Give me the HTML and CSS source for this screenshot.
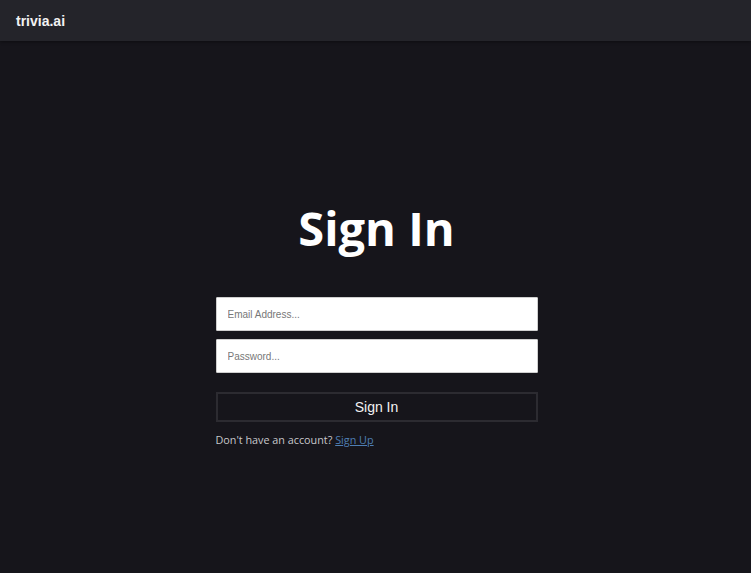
FILE: index.html
```html
<!DOCTYPE html>
<html>
<head>
<meta charset="utf-8">
<link rel="stylesheet" href="styles.css">
</head>
<body>
<header class="navbar"><span class="brand">trivia.ai</span></header>
<main class="page">
  <div class="auth">
    <h1 class="title">Sign In</h1>
    <form class="form">
      <input class="field" type="email" placeholder="Email Address...">
      <input class="field" type="password" placeholder="Password...">
      <button class="submit" type="button">Sign In</button>
    </form>
    <p class="alt">Don't have an account? <a class="link" href="#">Sign Up</a></p>
  </div>
</main>
</body>
</html>
```
FILE: styles.css
```css
html, body {
  margin: 0;
  height: 100%;
  background: #16151b;
}
body {
  font-family: "Liberation Sans", Arial, sans-serif;
  color: #fff;
}
.navbar {
  height: 41px;
  background: #24242a;
  display: flex;
  align-items: center;
  padding-left: 16px;
  box-shadow: 0 1px 3px rgba(0,0,0,0.4);
}
.brand {
  font-weight: bold;
  font-size: 14px;
  color: #f2f2f2;
}
.page {
  display: flex;
  justify-content: center;
  padding-left: 2px;
}
.auth {
  width: 322px;
  display: flex;
  flex-direction: column;
  padding-top: 159px;
}
.title {
  margin: 0;
  text-align: center;
  font-family: "Open Sans", sans-serif;
  font-weight: 700;
  font-size: 47px;
  line-height: 56px;
  color: #fff;
}
.form {
  margin-top: 41px;
  display: flex;
  flex-direction: column;
}
.field {
  box-sizing: border-box;
  height: 34px;
  margin: 0 0 8px 0;
  padding: 0 11px;
  border: 1px solid #cfcfcf;
  border-radius: 1px;
  background: #fff;
  font-family: "Liberation Sans", Arial, sans-serif;
  font-size: 10px;
  color: #333;
  outline: none;
}
.field::placeholder {
  color: #777;
}
.submit {
  box-sizing: border-box;
  margin-top: 11px;
  height: 30px;
  background: #16151b;
  border: 2px solid #2c2b31;
  color: #f2f2f2;
  font-family: "Liberation Sans", Arial, sans-serif;
  font-size: 14px;
  cursor: pointer;
}
.alt {
  margin: 10px 0 0;
  font-family: "Open Sans", sans-serif;
  font-size: 10.8px;
  color: #c8c8cc;
}
.link {
  color: #4f7fb3;
}
```
